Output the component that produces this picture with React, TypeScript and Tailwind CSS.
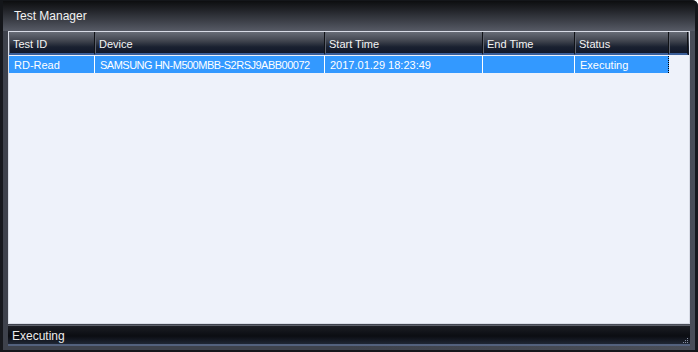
import React from "react";

// Dark "Test Manager" tool window with a single-row grid and a status strip.

type Col = { key: string; title: string; width: string };

const cols: Col[] = [
  { key: "id", title: "Test ID", width: "w-[86px]" },
  { key: "device", title: "Device", width: "w-[230px]" },
  { key: "start", title: "Start Time", width: "w-[158px]" },
  { key: "end", title: "End Time", width: "w-[92px]" },
  { key: "status", title: "Status", width: "w-[94px]" },
];

const row: Record<string, string> = {
  id: "RD-Read",
  device: "SAMSUNG HN-M500MBB-S2RSJ9ABB00072",
  start: "2017.01.29 18:23:49",
  end: "",
  status: "Executing",
};

export default function App() {
  return (
    <div className="flex h-[352px] w-[698px] flex-col overflow-hidden rounded-tr-[6px] bg-[#2c3039] font-['Liberation_Sans',Arial,sans-serif] text-[11px]">
      {/* title bar */}
      <div className="flex h-[31px] shrink-0 items-center border-l-[3px] border-r-[3px] border-t border-[#14161a] bg-gradient-to-b from-[#0d0e10] via-[#30333a] to-[#575b66] pl-[11px] text-[12px] text-[#f2f2f2]">
        Test Manager
      </div>

      <div className="flex min-h-0 flex-1 border-l-[3px] border-r-[3px] border-[#17191e]">
        <div className="flex min-h-0 flex-1 flex-col bg-gradient-to-r from-[#3e424c] via-[#3e424c] to-[#4a4e58] px-[5px]">
          {/* grid */}
          <div className="flex min-h-0 flex-1 flex-col border border-[#d8dce6] bg-[#eef2fa]">
            <div className="flex h-[23px] shrink-0 bg-[linear-gradient(to_bottom,#686d77_0%,#3f434d_40%,#1a2130_65%,#0d1528_100%)]">
              {cols.map((c) => (
                <div
                  key={c.key}
                  className={`${c.width} flex shrink-0 items-center border-b-2 border-r border-b-[#3a5f9a] border-r-[#101216] pl-[4px] pt-[3px] text-[#f4f4f4] shadow-[inset_1px_0_0_#5d626d]`}
                >
                  {c.title}
                </div>
              ))}
              <div className="w-[19px] shrink-0 border-b-2 border-r border-b-[#3a5f9a] border-r-[#101216] shadow-[inset_1px_0_0_#5d626d]" />
            </div>
            <div className="mt-px flex h-[17px] shrink-0">
              {cols.map((c, i) => (
                <div
                  key={c.key}
                  className={`${c.width} flex shrink-0 items-center overflow-hidden whitespace-nowrap bg-[#3399ff] pl-[5px] pt-px text-white ${
                    c.key === "device" ? "tracking-[-0.5px]" : ""
                  } ${
                    i === cols.length - 1
                      ? "border-r border-dotted border-r-black"
                      : "border-r border-r-white"
                  }`}
                >
                  {row[c.key]}
                </div>
              ))}
            </div>
          </div>

          {/* status strip */}
          <div className="relative mt-px flex h-[21px] shrink-0 items-center border-t border-[#5d616a] bg-gradient-to-b from-[#1c1e24] via-[#0b0d12] to-[#252d3e] pl-[4px] text-[12px] text-[#ececec] shadow-[inset_0_-2px_0_#53617d]">
            Executing
            <div className="absolute bottom-[3px] right-[2px] grid grid-cols-3 gap-px">
              <span />
              <span />
              <span className="h-px w-px bg-[#8a92a6]" />
              <span />
              <span className="h-px w-px bg-[#8a92a6]" />
              <span className="h-px w-px bg-[#8a92a6]" />
              <span className="h-px w-px bg-[#8a92a6]" />
              <span className="h-px w-px bg-[#8a92a6]" />
              <span className="h-px w-px bg-[#8a92a6]" />
            </div>
          </div>
          <div className="h-[4px] shrink-0" />
        </div>
      </div>
      <div className="h-[2px] shrink-0 bg-[#15171b]" />
    </div>
  );
}
